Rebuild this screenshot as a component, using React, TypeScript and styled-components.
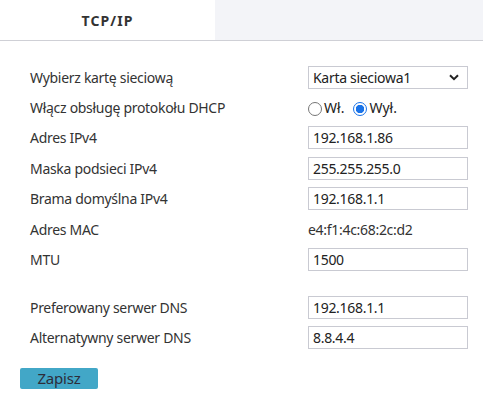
import styled, { createGlobalStyle } from "styled-components";

const GlobalStyle = createGlobalStyle`
  html, body {
    margin: 0;
    padding: 0;
    background: #ffffff;
  }
  body {
    font-family: "Noto Sans", "Liberation Sans", sans-serif;
    font-size: 14px;
    letter-spacing: -0.3px;
    color: #333333;
  }
`;

interface Field {
  label: string;
  kind: "select" | "radio" | "input" | "text" | "gap";
  value?: string;
}

const fields: Field[] = [
  { label: "Wybierz kartę sieciową", kind: "select", value: "Karta sieciowa1" },
  { label: "Włącz obsługę protokołu DHCP", kind: "radio" },
  { label: "Adres IPv4", kind: "input", value: "192.168.1.86" },
  { label: "Maska podsieci IPv4", kind: "input", value: "255.255.255.0" },
  { label: "Brama domyślna IPv4", kind: "input", value: "192.168.1.1" },
  { label: "Adres MAC", kind: "text", value: "e4:f1:4c:68:2c:d2" },
  { label: "MTU", kind: "input", value: "1500" },
  { label: "", kind: "gap" },
  { label: "Preferowany serwer DNS", kind: "input", value: "192.168.1.1" },
  { label: "Alternatywny serwer DNS", kind: "input", value: "8.8.4.4" },
];

export default function App() {
  const renderControl = (f: Field) => {
    switch (f.kind) {
      case "select":
        return (
          <Select>
            <span>{f.value}</span>
            <svg width="10" height="7" viewBox="0 0 10 7">
              <path d="M1 1.2 L5 5.2 L9 1.2" fill="none" stroke="#222" strokeWidth="2" />
            </svg>
          </Select>
        );
      case "radio":
        return (
          <RadioGroup>
            <RadioOption>
              <Radio $checked={false} />
              Wł.
            </RadioOption>
            <RadioOption>
              <Radio $checked />
              Wył.
            </RadioOption>
          </RadioGroup>
        );
      case "input":
        return <Input>{f.value}</Input>;
      case "text":
        return <Plain>{f.value}</Plain>;
      default:
        return null;
    }
  };

  return (
    <>
      <GlobalStyle />
      <Page>
        <TabBar>
          <Tab $active>TCP/IP</Tab>
          <TabFill />
        </TabBar>
        <Form>
          {fields.map((f, i) =>
            f.kind === "gap" ? (
              <Spacer key={i} />
            ) : (
              <Row key={i}>
                <Label>{f.label}</Label>
                {renderControl(f)}
              </Row>
            )
          )}
          <SaveButton>Zapisz</SaveButton>
        </Form>
      </Page>
    </>
  );
}

const Page = styled.div`
  width: 483px;
  height: 417px;
  background: #ffffff;
  overflow: hidden;
`;

const TabBar = styled.div`
  display: flex;
  height: 40px;
  border-bottom: 1px solid #cfd0d6;
`;

const Tab = styled.div<{ $active?: boolean }>`
  width: 215px;
  display: flex;
  align-items: center;
  justify-content: center;
  font-size: 14px;
  font-weight: 700;
  letter-spacing: 1.1px;
  color: #333333;
  background: ${(p) => (p.$active ? "#ffffff" : "#f3f4f8")};
`;

const TabFill = styled.div`
  flex: 1;
  background: #f3f4f8;
`;

const Form = styled.div`
  padding: 21px 0 0 30px;
  display: flex;
  flex-direction: column;
`;

const Row = styled.div`
  display: flex;
  align-items: center;
  height: 30.4px;
`;

const Spacer = styled.div`
  height: 17.6px;
`;

const Label = styled.div`
  width: 278px;
  flex-shrink: 0;
  color: #333333;
`;

const boxBase = `
  box-sizing: border-box;
  width: 160px;
  height: 23px;
  border: 1px solid #c9cad2;
  background: #ffffff;
  display: flex;
  align-items: center;
  padding: 0 4px;
  color: #222222;
`;

const Input = styled.div`
  ${boxBase}
`;

const Select = styled.div`
  ${boxBase}
  justify-content: space-between;
  padding-right: 8px;
`;

const Plain = styled.div`
  color: #333333;
`;

const RadioGroup = styled.div`
  display: flex;
  align-items: center;
  gap: 9px;
`;

const RadioOption = styled.label`
  display: flex;
  align-items: center;
  gap: 2px;
  color: #222222;
  letter-spacing: 0;
`;

/* checked state: blue ring, white gap, blue dot */
const Radio = styled.span<{ $checked: boolean }>`
  box-sizing: border-box;
  width: 14px;
  height: 14px;
  border-radius: 50%;
  border: 1px solid ${(p) => (p.$checked ? "#1a73e8" : "#767676")};
  background: ${(p) =>
    p.$checked ? "radial-gradient(circle, #1a73e8 0 4px, #ffffff 4.5px)" : "#ffffff"};
  margin-top: 3px;
`;

const SaveButton = styled.button`
  margin: 15px 0 0 -10px;
  width: 78px;
  height: 21px;
  border: none;
  border-radius: 2px;
  background: #42a7c7;
  color: #2d2d3a;
  font-family: "Noto Sans", "Liberation Sans", sans-serif;
  font-size: 15px;
  letter-spacing: -0.2px;
  padding: 0;
  line-height: 21px;
`;
